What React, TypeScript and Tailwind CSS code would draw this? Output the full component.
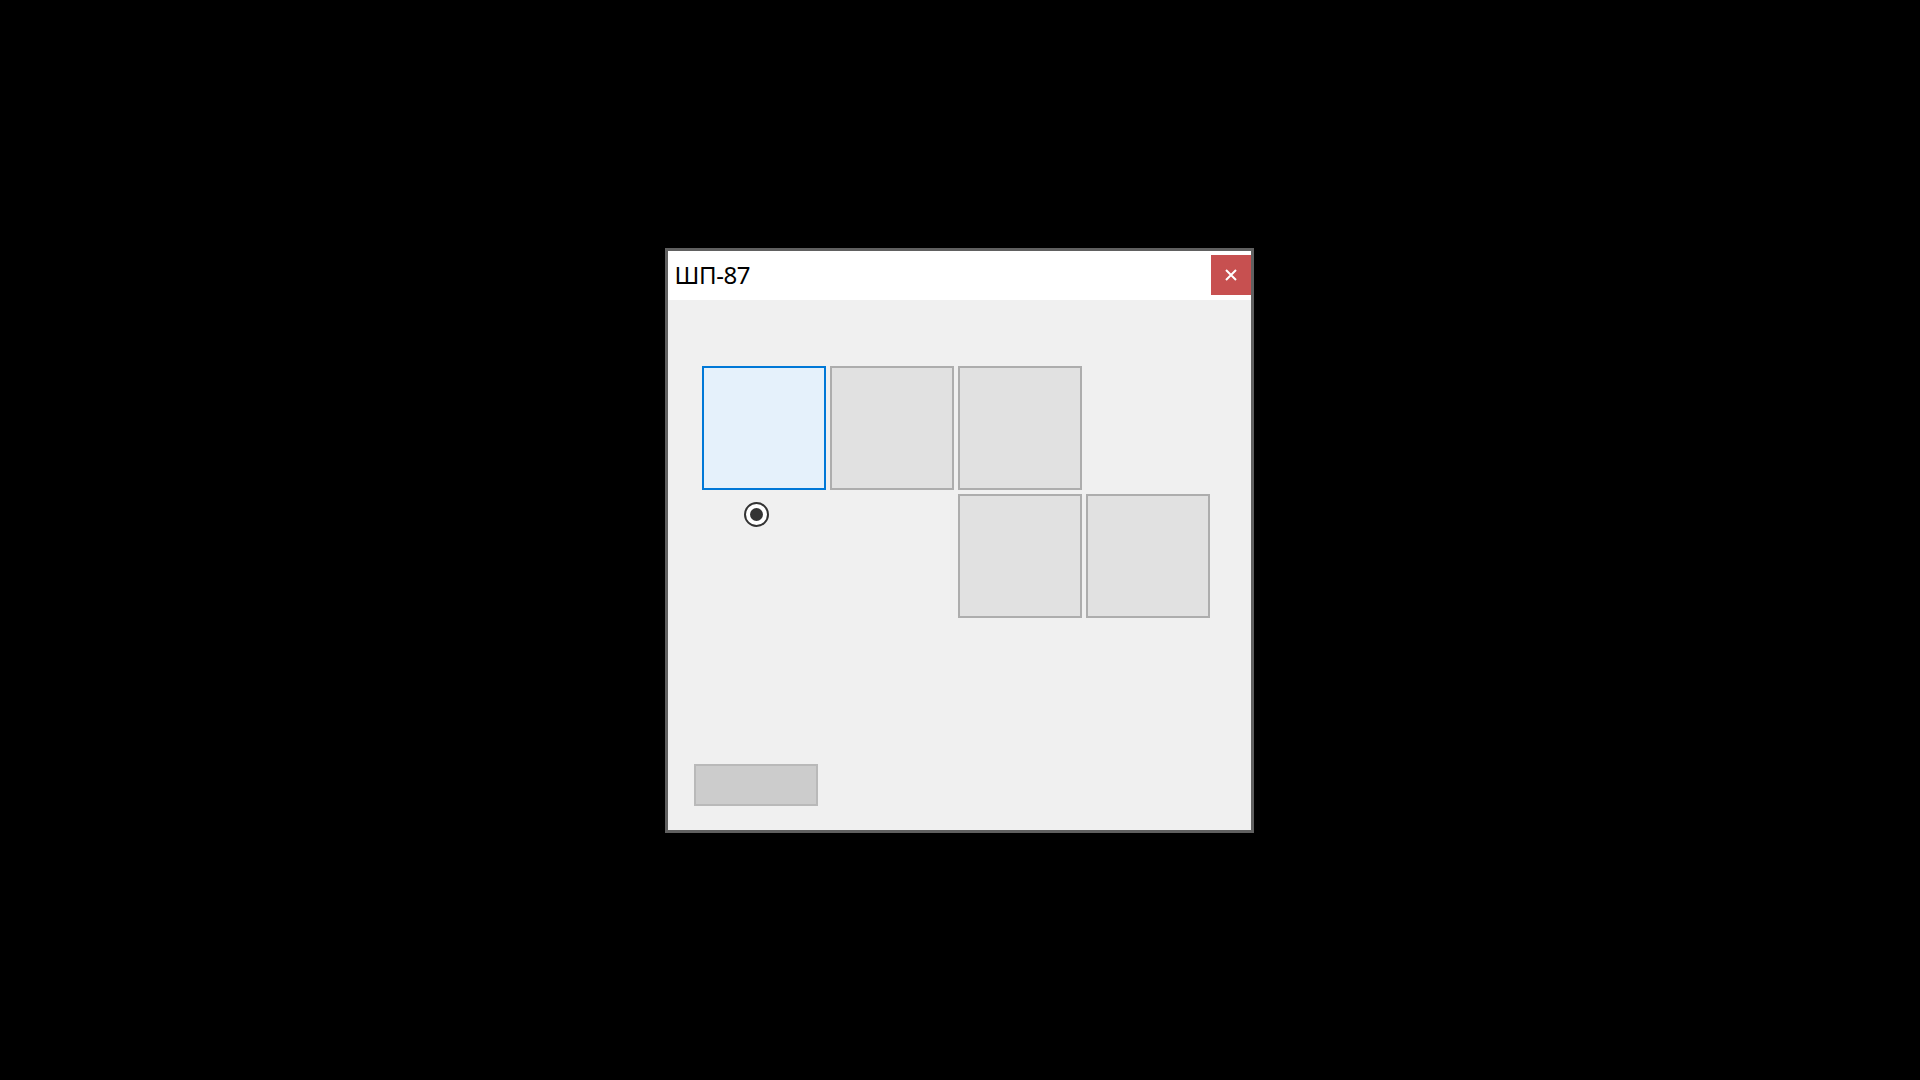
import React from "react";

function Cell({ active }: { active?: boolean }) {
  return (
    <div
      className={
        active
          ? "w-[124px] h-[124px] border-2 border-[#0078d7] bg-[#e5f1fb]"
          : "w-[124px] h-[124px] border-2 border-[#adadad] bg-[#e1e1e1]"
      }
    />
  );
}

export default function App() {
  return (
    <div className="w-screen h-screen bg-black flex items-center justify-center">
      <div className="mr-[2px] w-[589px] h-[585px] border-[3px] border-[#606060] bg-[#f0f0f0] flex flex-col">
        <div className="h-[49px] bg-white flex items-center justify-between pl-[7px]">
          <span
            className="text-[24px] tracking-[-0.4px] text-black leading-none"
            style={{ fontFamily: '"Noto Sans", "Open Sans", sans-serif' }}
          >
            ШП-87
          </span>
          <button className="w-[40px] h-[40px] bg-[#c75050] flex items-center justify-center">
            <svg width="12" height="12" viewBox="0 0 12 12">
              <path d="M1 1 L11 11 M11 1 L1 11" stroke="white" strokeWidth="2" />
            </svg>
          </button>
        </div>
        <div className="flex-1 flex flex-col pt-[66px] pl-[26px]">
          <div className="ml-[8px] grid grid-cols-[124px_124px_124px_124px] grid-rows-[124px_124px] gap-[4px]">
            <Cell active />
            <Cell />
            <Cell />
            <div />
            <div className="pt-[8px] pl-[42px]">
              <div className="w-[25px] h-[25px] rounded-full border-2 border-[#333333] bg-white flex items-center justify-center">
                <div className="w-[13px] h-[13px] rounded-full bg-[#333333]" />
              </div>
            </div>
            <div />
            <Cell />
            <Cell />
          </div>
          <div className="mt-[146px] w-[124px] h-[42px] bg-[#cccccc] border-2 border-[#b9b9b9]" />
        </div>
      </div>
    </div>
  );
}
